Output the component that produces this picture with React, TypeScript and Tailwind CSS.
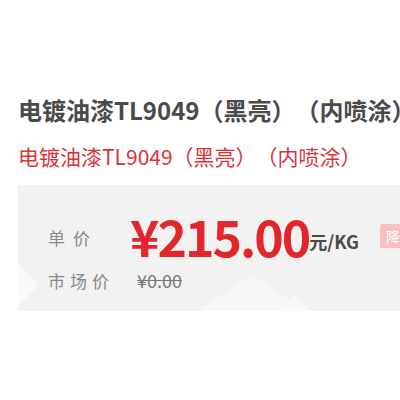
import React from 'react';

const font = { fontFamily: '"Noto Sans CJK SC", "Noto Sans", sans-serif' };

export default function App() {
  return (
    <div className="w-[400px] h-[400px] bg-white overflow-hidden [text-spacing-trim:space-all]" style={font}>
      <div className="pt-[94px] pl-[18px] whitespace-nowrap">
        <h1 className="text-[24px] leading-[32px] font-bold text-[#4a4a4a]">
          电镀油漆TL9049（黑亮）（内喷涂）
        </h1>
        <p className="mt-[15px] text-[21px] leading-[30px] text-[#dc3239]">
          电镀油漆TL9049（黑亮）（内喷涂）
        </p>
      </div>

      <div className="relative ml-[18px] mt-[14px] h-[126px] bg-[#f2f2f2] pl-[30px] pt-[28px] overflow-hidden">
        {/* faint background triangles */}
        <svg className="absolute left-0 top-0" width="382" height="126" viewBox="0 0 382 126">
          <polygon points="0,78 20,100 0,122" fill="#fafafa" />
          <polygon points="233,90 180,126 290,126" fill="#f7f7f7" />
          <polygon points="277,110 262,126 292,126" fill="#f9f9f9" />
        </svg>
        <div className="relative flex items-start whitespace-nowrap">
          <span className="mt-[13px] w-[82px] text-[17px] leading-[24px] tracking-[8px] text-[#888]">单价</span>
          <span className="-mt-[1px] text-[50px] leading-[46px] font-bold text-[#e3262b] tracking-[-2px]">¥215.00</span>
          <span className="mt-[16px] text-[18px] leading-[24px] font-bold text-[#4a4a4a]">元/KG</span>
        </div>
        <div className="relative mt-[9px] flex items-baseline whitespace-nowrap">
          <span className="w-[89px] text-[17px] tracking-[5px] text-[#888]">市场价</span>
          <span className="text-[18px] text-[#777] line-through">¥0.00</span>
        </div>
        <div className="absolute left-[362px] top-[39px] h-[24px] w-[40px] bg-[#f6c0c0] rounded-tl-[3px] flex items-center pl-[6px] text-[14px] text-white">
          降
        </div>
      </div>
    </div>
  );
}
